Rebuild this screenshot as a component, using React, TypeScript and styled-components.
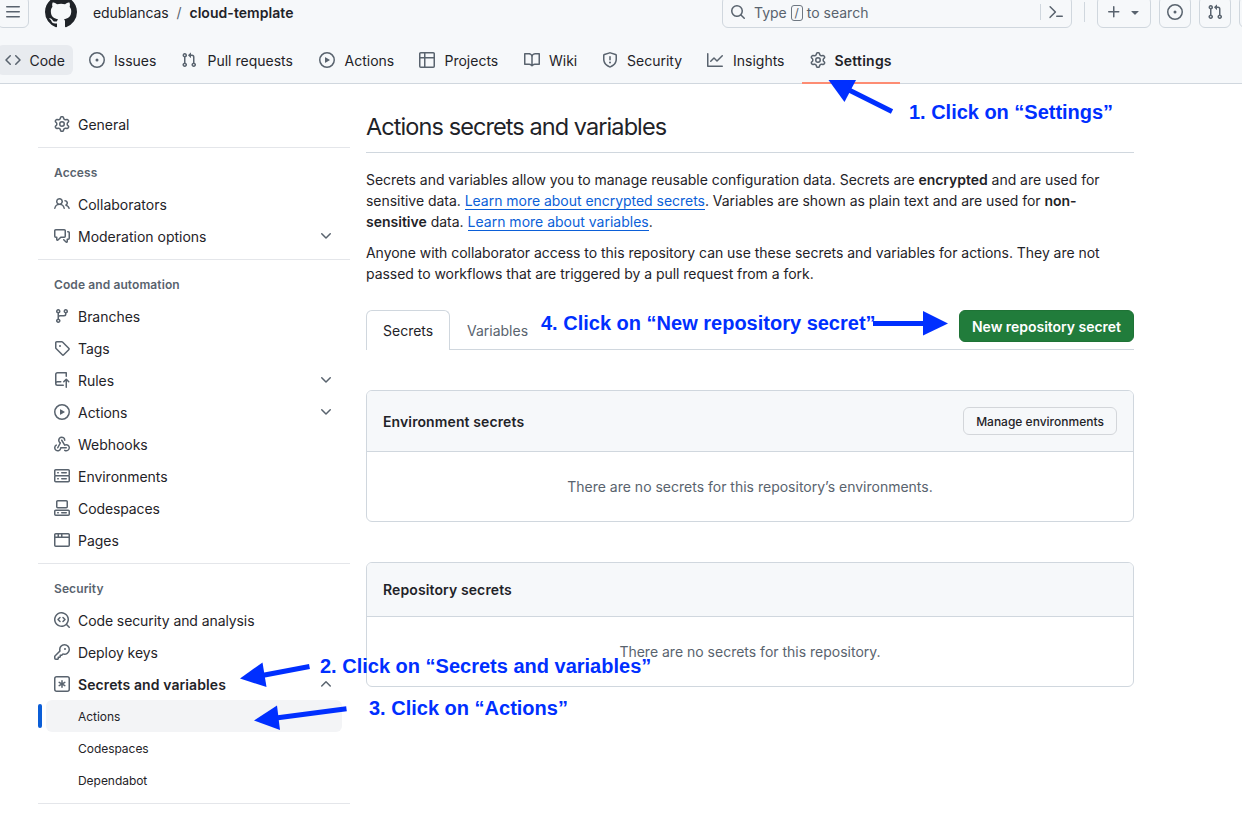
import React from "react";
import styled, { createGlobalStyle, css } from "styled-components";

const GlobalStyle = createGlobalStyle`
  *, *::before, *::after { box-sizing: border-box; }
  body {
    margin: 0;
    background: #fff;
    color: #1f2328;
    font: 400 14px/21px Inter, "Liberation Sans", sans-serif;
    overflow: hidden;
  }
  h1, h2, h3, p, ul { margin: 0; padding: 0; }
  ul { list-style: none; }
  button { font: inherit; color: inherit; }
`;

/* ---------- icons ---------- */

const icons = {
  bars: ["M1 2.75A.75.75 0 0 1 1.75 2h12.5a.75.75 0 0 1 0 1.5H1.75A.75.75 0 0 1 1 2.75Zm0 5A.75.75 0 0 1 1.75 7h12.5a.75.75 0 0 1 0 1.5H1.75A.75.75 0 0 1 1 7.75ZM1.75 12h12.5a.75.75 0 0 1 0 1.5H1.75a.75.75 0 0 1 0-1.5Z"],
  github: ["M8 0c4.42 0 8 3.58 8 8a8.013 8.013 0 0 1-5.45 7.59c-.4.08-.55-.17-.55-.38 0-.27.01-1.13.01-2.2 0-.75-.25-1.23-.54-1.48 1.78-.2 3.65-.88 3.65-3.95 0-.88-.31-1.59-.82-2.15.08-.2.36-1.02-.08-2.12 0 0-.67-.22-2.2.82-.64-.18-1.32-.27-2-.27-.68 0-1.36.09-2 .27-1.53-1.03-2.2-.82-2.2-.82-.44 1.1-.16 1.92-.08 2.12-.51.56-.82 1.28-.82 2.15 0 3.06 1.86 3.75 3.64 3.95-.23.2-.44.55-.51 1.07-.46.21-1.61.55-2.33-.66-.15-.24-.6-.83-1.23-.82-.67.01-.27.38.01.53.34.19.73.9.82 1.13.16.45.68 1.31 2.69.94 0 .67.01 1.3.01 1.49 0 .21-.15.45-.55.38A7.995 7.995 0 0 1 0 8c0-4.42 3.58-8 8-8Z"],
  code: ["m11.28 3.22 4.25 4.25a.75.75 0 0 1 0 1.06l-4.25 4.25a.749.749 0 0 1-1.275-.326.749.749 0 0 1 .215-.734L13.94 8l-3.72-3.72a.749.749 0 0 1 .326-1.275.749.749 0 0 1 .734.215Zm-6.56 0a.751.751 0 0 1 1.042.018.751.751 0 0 1 .018 1.042L2.06 8l3.72 3.72a.749.749 0 0 1-.326 1.275.749.749 0 0 1-.734-.215L.47 8.53a.75.75 0 0 1 0-1.06Z"],
  issue: [
    "M8 9.5a1.5 1.5 0 1 0 0-3 1.5 1.5 0 0 0 0 3Z",
    "M8 0a8 8 0 1 1 0 16A8 8 0 0 1 8 0ZM1.5 8a6.5 6.5 0 1 0 13 0 6.5 6.5 0 0 0-13 0Z",
  ],
  pull: ["M1.5 3.25a2.25 2.25 0 1 1 3 2.122v5.256a2.251 2.251 0 1 1-1.5 0V5.372A2.25 2.25 0 0 1 1.5 3.25Zm5.677-.177L9.573.677A.25.25 0 0 1 10 .854V2.5h1A2.5 2.5 0 0 1 13.5 5v5.628a2.251 2.251 0 1 1-1.5 0V5a1 1 0 0 0-1-1h-1v1.646a.25.25 0 0 1-.427.177L7.177 3.427a.25.25 0 0 1 0-.354ZM3.75 2.5a.75.75 0 1 0 0 1.5.75.75 0 0 0 0-1.5Zm0 9.5a.75.75 0 1 0 0 1.5.75.75 0 0 0 0-1.5Zm8.25.75a.75.75 0 1 0 1.5 0 .75.75 0 0 0-1.5 0Z"],
  play: ["M8 0a8 8 0 1 1 0 16A8 8 0 0 1 8 0ZM1.5 8a6.5 6.5 0 1 0 13 0 6.5 6.5 0 0 0-13 0Zm4.879-2.773 4.264 2.559a.25.25 0 0 1 0 .428l-4.264 2.559A.25.25 0 0 1 6 10.559V5.442a.25.25 0 0 1 .379-.215Z"],
  table: ["M0 1.75C0 .784.784 0 1.75 0h12.5C15.216 0 16 .784 16 1.75v12.5A1.75 1.75 0 0 1 14.25 16H1.75A1.75 1.75 0 0 1 0 14.25ZM6.5 6.5v8h7.75a.25.25 0 0 0 .25-.25V6.5Zm8-1.5V1.75a.25.25 0 0 0-.25-.25H6.5V5Zm-13 1.5v7.75c0 .138.112.25.25.25H5v-8ZM5 5V1.5H1.75a.25.25 0 0 0-.25.25V5Z"],
  book: ["M0 1.75A.75.75 0 0 1 .75 1h4.253c1.227 0 2.317.59 3 1.501A3.743 3.743 0 0 1 11.006 1h4.245a.75.75 0 0 1 .75.75v10.5a.75.75 0 0 1-.75.75h-4.507a2.25 2.25 0 0 0-1.591.659l-.622.621a.75.75 0 0 1-1.06 0l-.622-.621A2.25 2.25 0 0 0 5.258 13H.75a.75.75 0 0 1-.75-.75Zm7.251 10.324.004-5.073-.002-2.253A2.25 2.25 0 0 0 5.003 2.5H1.5v9h3.757a3.75 3.75 0 0 1 1.994.574ZM8.755 4.75l-.004 7.322a3.752 3.752 0 0 1 1.992-.572H14.5v-9h-3.495a2.25 2.25 0 0 0-2.25 2.25Z"],
  shield: ["M7.467.133a1.748 1.748 0 0 1 1.066 0l5.25 1.68A1.75 1.75 0 0 1 15 3.48V7c0 1.566-.32 3.182-1.303 4.682-.983 1.498-2.585 2.813-5.032 3.855a1.697 1.697 0 0 1-1.33 0c-2.447-1.042-4.049-2.357-5.032-3.855C1.32 10.182 1 8.566 1 7V3.48a1.75 1.75 0 0 1 1.217-1.667Zm.61 1.429a.25.25 0 0 0-.153 0l-5.25 1.68a.25.25 0 0 0-.174.238V7c0 1.358.275 2.666 1.057 3.86.784 1.194 2.121 2.34 4.366 3.297a.196.196 0 0 0 .154 0c2.245-.956 3.582-2.104 4.366-3.298C13.225 9.666 13.5 8.36 13.5 7V3.48a.251.251 0 0 0-.174-.237l-5.25-1.68ZM8.75 4.75v3a.75.75 0 0 1-1.5 0v-3a.75.75 0 0 1 1.5 0ZM9 10.5a1 1 0 1 1-2 0 1 1 0 0 1 2 0Z"],
  graph: ["M1.5 1.75V13.5h13.75a.75.75 0 0 1 0 1.5H.75a.75.75 0 0 1-.75-.75V1.75a.75.75 0 0 1 1.5 0Zm14.28 2.53-5.25 5.25a.75.75 0 0 1-1.06 0L7 7.06 4.28 9.78a.751.751 0 0 1-1.042-.018.751.751 0 0 1-.018-1.042l3.25-3.25a.75.75 0 0 1 1.06 0L10 7.94l4.72-4.72a.751.751 0 0 1 1.042.018.751.751 0 0 1 .018 1.042Z"],
  gear: ["M8 0a8.2 8.2 0 0 1 .701.031C9.444.095 9.99.645 10.16 1.29l.288 1.107c.018.066.079.158.212.224.231.114.454.243.668.386.123.082.233.09.299.071l1.103-.303c.644-.176 1.392.021 1.82.63.27.385.506.792.704 1.218.315.675.111 1.422-.364 1.891l-.814.806c-.049.048-.098.147-.088.294.016.257.016.515 0 .772-.01.147.038.246.088.294l.814.806c.475.469.679 1.216.364 1.891a7.977 7.977 0 0 1-.704 1.217c-.428.61-1.176.807-1.82.63l-1.102-.302c-.067-.019-.177-.011-.3.071a5.909 5.909 0 0 1-.668.386c-.133.066-.194.158-.211.224l-.29 1.106c-.168.646-.715 1.196-1.458 1.26a8.006 8.006 0 0 1-1.402 0c-.743-.064-1.289-.614-1.458-1.26l-.289-1.106c-.018-.066-.079-.158-.212-.224a5.738 5.738 0 0 1-.668-.386c-.123-.082-.233-.09-.299-.071l-1.103.303c-.644.176-1.392-.021-1.82-.63a8.12 8.12 0 0 1-.704-1.218c-.315-.675-.111-1.422.363-1.891l.815-.806c.05-.048.098-.147.088-.294a6.214 6.214 0 0 1 0-.772c.01-.147-.038-.246-.088-.294l-.815-.806C.635 6.045.431 5.298.746 4.623a7.92 7.92 0 0 1 .704-1.217c.428-.61 1.176-.807 1.82-.63l1.102.302c.067.019.177.011.3-.071.214-.143.437-.272.668-.386.133-.066.194-.158.211-.224l.29-1.106C6.009.645 6.556.095 7.299.03 7.53.01 7.764 0 8 0Zm-.571 1.525c-.036.003-.108.036-.137.146l-.289 1.105c-.147.561-.549.967-.998 1.189-.173.086-.34.183-.5.29-.417.278-.97.423-1.529.27l-1.103-.303c-.109-.03-.175.016-.195.045-.22.312-.412.644-.573.99-.014.031-.021.11.059.19l.815.806c.411.406.562.957.53 1.456a4.709 4.709 0 0 0 0 .582c.032.499-.119 1.05-.53 1.456l-.815.806c-.081.08-.073.159-.059.19.162.346.353.677.573.989.02.03.085.076.195.046l1.102-.303c.56-.153 1.113-.008 1.53.27.161.107.328.204.501.29.447.222.85.629.997 1.189l.289 1.105c.029.109.101.143.137.146a6.6 6.6 0 0 0 1.142 0c.036-.003.108-.036.137-.146l.289-1.105c.147-.561.549-.967.998-1.189.173-.086.34-.183.5-.29.417-.278.97-.423 1.529-.27l1.103.303c.109.029.175-.016.195-.045.22-.313.411-.644.573-.99.014-.031.021-.11-.059-.19l-.815-.806c-.411-.406-.562-.957-.53-1.456a4.709 4.709 0 0 0 0-.582c-.032-.499.119-1.05.53-1.456l.815-.806c.081-.08.073-.159.059-.19a6.464 6.464 0 0 0-.573-.989c-.02-.03-.085-.076-.195-.046l-1.102.303c-.56.153-1.113.008-1.53-.27a4.44 4.44 0 0 0-.501-.29c-.447-.222-.85-.629-.997-1.189l-.289-1.105c-.029-.11-.101-.143-.137-.146a6.6 6.6 0 0 0-1.142 0ZM11 8a3 3 0 1 1-6 0 3 3 0 0 1 6 0ZM9.5 8a1.5 1.5 0 1 0-3.001.001A1.5 1.5 0 0 0 9.5 8Z"],
  search: ["M10.68 11.74a6 6 0 0 1-7.922-8.982 6 6 0 0 1 8.982 7.922l3.04 3.04a.749.749 0 0 1-.326 1.275.749.749 0 0 1-.734-.215ZM11.5 7a4.499 4.499 0 1 0-8.997 0A4.499 4.499 0 0 0 11.5 7Z"],
  palette: ["m6.354 8.04-4.773 4.773a.75.75 0 1 0 1.061 1.06L7.945 8.57a.75.75 0 0 0 0-1.06L2.642 2.206a.75.75 0 0 0-1.06 1.061L6.353 8.04ZM8.75 11.5a.75.75 0 0 0 0 1.5h5.5a.75.75 0 0 0 0-1.5h-5.5Z"],
  plus: ["M7.75 2a.75.75 0 0 1 .75.75V7h4.25a.75.75 0 0 1 0 1.5H8.5v4.25a.75.75 0 0 1-1.5 0V8.5H2.75a.75.75 0 0 1 0-1.5H7V2.75A.75.75 0 0 1 7.75 2Z"],
  triangle: ["m4.427 7.427 3.396 3.396a.25.25 0 0 0 .354 0l3.396-3.396A.25.25 0 0 0 11.396 7H4.604a.25.25 0 0 0-.177.427Z"],
  people: ["M2 5.5a3.5 3.5 0 1 1 5.898 2.549 5.508 5.508 0 0 1 3.034 4.084.75.75 0 1 1-1.482.235 4 4 0 0 0-7.9 0 .75.75 0 0 1-1.482-.236A5.507 5.507 0 0 1 3.102 8.05 3.493 3.493 0 0 1 2 5.5ZM11 4a3.001 3.001 0 0 1 2.22 5.018 5.01 5.01 0 0 1 2.56 3.012.749.749 0 0 1-.885.954.752.752 0 0 1-.549-.514 3.507 3.507 0 0 0-2.522-2.372.75.75 0 0 1-.574-.73v-.352a.75.75 0 0 1 .416-.672A1.5 1.5 0 0 0 11 5.5.75.75 0 0 1 11 4Zm-5.5-.5a2 2 0 1 0-.001 3.999A2 2 0 0 0 5.5 3.5Z"],
  discussion: ["M1.75 1h8.5c.966 0 1.75.784 1.75 1.75v5.5A1.75 1.75 0 0 1 10.25 10H7.061l-2.574 2.573A1.458 1.458 0 0 1 2 11.543V10h-.25A1.75 1.75 0 0 1 0 8.25v-5.5C0 1.784.784 1 1.75 1ZM1.5 2.75v5.5c0 .138.112.25.25.25h1a.75.75 0 0 1 .75.75v2.19l2.72-2.72a.749.749 0 0 1 .53-.22h3.5a.25.25 0 0 0 .25-.25v-5.5a.25.25 0 0 0-.25-.25h-8.5a.25.25 0 0 0-.25.25Zm13 2a.25.25 0 0 0-.25-.25h-.5a.75.75 0 0 1 0-1.5h.5c.966 0 1.75.784 1.75 1.75v5.5A1.75 1.75 0 0 1 14.25 12H14v1.543a1.458 1.458 0 0 1-2.487 1.03L9.22 12.28a.749.749 0 0 1 .326-1.275.749.749 0 0 1 .734.215l2.22 2.22v-2.19a.75.75 0 0 1 .75-.75h1a.25.25 0 0 0 .25-.25Z"],
  branch: ["M9.5 3.25a2.25 2.25 0 1 1 3 2.122V6A2.5 2.5 0 0 1 10 8.5H6a1 1 0 0 0-1 1v1.128a2.251 2.251 0 1 1-1.5 0V5.372a2.25 2.25 0 1 1 1.5 0v1.836A2.493 2.493 0 0 1 6 7h4a1 1 0 0 0 1-1v-.628A2.25 2.25 0 0 1 9.5 3.25Zm-6 0a.75.75 0 1 0 1.5 0 .75.75 0 0 0-1.5 0Zm8.25-.75a.75.75 0 1 0 0 1.5.75.75 0 0 0 0-1.5ZM4.25 12a.75.75 0 1 0 0 1.5.75.75 0 0 0 0-1.5Z"],
  tag: ["M1 7.775V2.75C1 1.784 1.784 1 2.75 1h5.025c.464 0 .91.184 1.238.513l6.25 6.25a1.75 1.75 0 0 1 0 2.474l-5.026 5.026a1.75 1.75 0 0 1-2.474 0l-6.25-6.25A1.752 1.752 0 0 1 1 7.775Zm1.5 0c0 .066.026.13.073.177l6.25 6.25a.25.25 0 0 0 .354 0l5.025-5.025a.25.25 0 0 0 0-.354l-6.25-6.25a.25.25 0 0 0-.177-.073H2.75a.25.25 0 0 0-.25.25ZM6 5a1 1 0 1 1 0 2 1 1 0 0 1 0-2Z"],
  push: ["M1 2.5A2.5 2.5 0 0 1 3.5 0h8.75a.75.75 0 0 1 .75.75v3.5a.75.75 0 0 1-1.5 0V1.5h-8a1 1 0 0 0-1 1v6.708A2.493 2.493 0 0 1 3.5 9h3.25a.75.75 0 0 1 0 1.5H3.5a1 1 0 0 0 0 2h5.75a.75.75 0 0 1 0 1.5H3.5A2.5 2.5 0 0 1 1 11.5Zm13.23 7.79h-.001l-1.224-1.224v6.184a.75.75 0 0 1-1.5 0V9.066L10.28 10.29a.75.75 0 0 1-1.06-1.061l2.505-2.504a.75.75 0 0 1 1.06 0L15.29 9.23a.751.751 0 0 1-.018 1.042.751.751 0 0 1-1.042.018Z"],
  webhook: [
    "M5.5 4.25a2.25 2.25 0 0 1 4.5 0 .75.75 0 0 0 1.5 0 3.75 3.75 0 1 0-6.14 2.889l-2.272 4.258a.75.75 0 0 0 1.324.706L7 7.25a.75.75 0 0 0-.309-1.015A2.25 2.25 0 0 1 5.5 4.25Z",
    "M7.364 3.607a.75.75 0 0 1 1.03.257l2.608 4.349a3.75 3.75 0 1 1-.628 6.785.75.75 0 0 1 .752-1.299 2.25 2.25 0 1 0-.033-3.88.75.75 0 0 1-1.03-.256L7.107 4.636a.75.75 0 0 1 .257-1.03Z",
    "M2.9 8.776A.75.75 0 0 1 2.625 9.8 2.25 2.25 0 1 0 6 11.75a.75.75 0 0 1 .75-.751h5.5a.75.75 0 0 1 0 1.5H7.425a3.751 3.751 0 1 1-5.55-3.998.75.75 0 0 1 1.024.274Z",
  ],
  server: ["M1.75 1h12.5c.966 0 1.75.784 1.75 1.75v4c0 .372-.116.717-.314 1 .198.283.314.628.314 1v4a1.75 1.75 0 0 1-1.75 1.75H1.75A1.75 1.75 0 0 1 0 12.75v-4c0-.358.109-.707.314-1a1.739 1.739 0 0 1-.314-1v-4C0 1.784.784 1 1.75 1ZM1.5 2.75v4c0 .138.112.25.25.25h12.5a.25.25 0 0 0 .25-.25v-4a.25.25 0 0 0-.25-.25H1.75a.25.25 0 0 0-.25.25Zm.25 5.75a.25.25 0 0 0-.25.25v4c0 .138.112.25.25.25h12.5a.25.25 0 0 0 .25-.25v-4a.25.25 0 0 0-.25-.25ZM7 4.75A.75.75 0 0 1 7.75 4h4.5a.75.75 0 0 1 0 1.5h-4.5A.75.75 0 0 1 7 4.75ZM7.75 10h4.5a.75.75 0 0 1 0 1.5h-4.5a.75.75 0 0 1 0-1.5ZM3 4.75A.75.75 0 0 1 3.75 4h.5a.75.75 0 0 1 0 1.5h-.5A.75.75 0 0 1 3 4.75ZM3.75 10h.5a.75.75 0 0 1 0 1.5h-.5a.75.75 0 0 1 0-1.5Z"],
  codespaces: [
    "M0 11.25c0-.966.784-1.75 1.75-1.75h12.5c.966 0 1.75.784 1.75 1.75v3A1.75 1.75 0 0 1 14.25 16H1.75A1.75 1.75 0 0 1 0 14.25Zm2-9.5C2 .784 2.784 0 3.75 0h8.5C13.216 0 14 .784 14 1.75v5a1.75 1.75 0 0 1-1.75 1.75h-8.5A1.75 1.75 0 0 1 2 6.75Zm1.75-.25a.25.25 0 0 0-.25.25v5c0 .138.112.25.25.25h8.5a.25.25 0 0 0 .25-.25v-5a.25.25 0 0 0-.25-.25Zm-2 9.5a.25.25 0 0 0-.25.25v3c0 .138.112.25.25.25h12.5a.25.25 0 0 0 .25-.25v-3a.25.25 0 0 0-.25-.25Z",
    "M7 12.75a.75.75 0 0 1 .75-.75h4.5a.75.75 0 0 1 0 1.5h-4.5a.75.75 0 0 1-.75-.75Zm-4 0a.75.75 0 0 1 .75-.75h.5a.75.75 0 0 1 0 1.5h-.5a.75.75 0 0 1-.75-.75Z",
  ],
  browser: ["M0 2.75C0 1.784.784 1 1.75 1h12.5c.966 0 1.75.784 1.75 1.75v10.5A1.75 1.75 0 0 1 14.25 15H1.75A1.75 1.75 0 0 1 0 13.25ZM14.5 6h-13v7.25c0 .138.112.25.25.25h12.5a.25.25 0 0 0 .25-.25Zm-6-3.5v2h6V2.75a.25.25 0 0 0-.25-.25ZM5 2.5v2h2v-2Zm-3.25 0a.25.25 0 0 0-.25.25V4.5h2v-2Z"],
  codescan: [
    "M8.47 4.97a.75.75 0 0 0 0 1.06L9.94 7.5 8.47 8.97a.75.75 0 1 0 1.06 1.06l2-2a.75.75 0 0 0 0-1.06l-2-2a.75.75 0 0 0-1.06 0ZM6.53 6.03a.75.75 0 0 0-1.06-1.06l-2 2a.75.75 0 0 0 0 1.06l2 2a.75.75 0 1 0 1.06-1.06L5.06 7.5l1.47-1.47Z",
    "M12.246 13.307a7.501 7.501 0 1 1 1.06-1.06l2.474 2.473a.749.749 0 0 1-.326 1.275.749.749 0 0 1-.734-.215ZM1.5 7.5a6.002 6.002 0 0 0 3.608 5.504 6.002 6.002 0 0 0 6.486-1.117.748.748 0 0 1 .292-.293A6 6 0 1 0 1.5 7.5Z",
  ],
  key: ["M10.5 0a5.499 5.499 0 1 1-1.288 10.848l-.932.932a.749.749 0 0 1-.53.22H7v.75a.749.749 0 0 1-.22.53l-.5.5a.749.749 0 0 1-.53.22H5v.75a.749.749 0 0 1-.22.53l-.5.5a.749.749 0 0 1-.53.22h-2A1.75 1.75 0 0 1 0 14.25v-2c0-.199.079-.389.22-.53l4.932-4.932A5.5 5.5 0 0 1 10.5 0Zm-4 5.5c-.001.431.069.86.205 1.269a.75.75 0 0 1-.181.768L1.5 12.56v1.69c0 .138.112.25.25.25h1.69l.06-.06v-1.19a.75.75 0 0 1 .75-.75h1.19l.06-.06v-1.19a.75.75 0 0 1 .75-.75h1.19l1.023-1.025a.75.75 0 0 1 .768-.18A4 4 0 1 0 6.5 5.5ZM11 6a1 1 0 1 1 0-2 1 1 0 0 1 0 2Z"],
  asterisk: [
    "M0 2.75A2.75 2.75 0 0 1 2.75 0h10.5A2.75 2.75 0 0 1 16 2.75v10.5A2.75 2.75 0 0 1 13.25 16H2.75A2.75 2.75 0 0 1 0 13.25ZM2.75 1.5c-.69 0-1.25.56-1.25 1.25v10.5c0 .69.56 1.25 1.25 1.25h10.5c.69 0 1.25-.56 1.25-1.25V2.75c0-.69-.56-1.25-1.25-1.25Z",
    "M8 4a.75.75 0 0 1 .75.75V6.7l1.69-.975a.75.75 0 0 1 .75 1.3L9.5 8l1.69.976a.75.75 0 0 1-.75 1.298L8.75 9.3v1.951a.75.75 0 0 1-1.5 0V9.299l-1.69.976a.75.75 0 0 1-.75-1.3L6.5 8l-1.69-.975a.75.75 0 0 1 .75-1.3l1.69.976V4.75A.75.75 0 0 1 8 4Z",
  ],
  down: ["M12.78 5.22a.749.749 0 0 1 0 1.06l-4.25 4.25a.749.749 0 0 1-1.06 0L3.22 6.28a.749.749 0 1 1 1.06-1.06L8 8.939l3.72-3.719a.749.749 0 0 1 1.06 0Z"],
  up: ["M3.22 10.53a.749.749 0 0 1 0-1.06l4.25-4.25a.749.749 0 0 1 1.06 0l4.25 4.25a.749.749 0 1 1-1.06 1.06L8 6.811 4.28 10.53a.749.749 0 0 1-1.06 0Z"],
};

type IconName = keyof typeof icons;

const Svg = styled.svg`
  display: block;
  flex: none;
  fill: currentColor;
`;

const Icon = ({ name, size = 16 }: { name: IconName; size?: number }) => (
  <Svg width={size} height={size} viewBox="0 0 16 16" aria-hidden>
    {icons[name].map((d) => (
      <path key={d} d={d} />
    ))}
  </Svg>
);

/* ---------- page header ---------- */

const Page = styled.div`
  position: relative;
  width: 1242px;
  height: 818px;
  overflow: hidden;
`;

const Header = styled.header`
  display: flow-root;
  height: 84px;
  background: #f6f8fa;
  border-bottom: 1px solid #d0d7de;
`;

const TopBar = styled.div`
  display: flex;
  align-items: center;
  height: 32px;
  width: 1274px;
  margin: -4px 0 0 -3px;
`;

const HeaderButton = styled.button<{ $wide?: boolean }>`
  display: flex;
  align-items: center;
  justify-content: center;
  gap: 5px;
  flex: none;
  width: ${(p) => (p.$wide ? 54 : 32)}px;
  height: 32px;
  padding: 0;
  border: 1px solid #d0d7de;
  border-radius: 6px;
  background: transparent;
  color: #59636e;
`;

const Logo = styled.a`
  margin: 0 0 0 16px;
  color: #1f2328;
`;

const Crumbs = styled.nav`
  display: flex;
  gap: 8px;
  margin: 1px 0 0 16px;
  width: 629px;
  letter-spacing: -0.1px;
`;

const Slash = styled.span`
  color: #59636e;
`;

const RepoName = styled.span`
  font-weight: 600;
  letter-spacing: 0.05px;
`;

const SearchBox = styled.div`
  display: flex;
  align-items: center;
  width: 350px;
  height: 32px;
  padding: 0 7px;
  border: 1px solid #d0d7de;
  border-radius: 6px;
  color: #59636e;
`;

const SearchText = styled.span`
  display: flex;
  align-items: center;
  gap: 4px;
  flex: 1;
  margin: 1px 0 0 8px;
`;

const KeyHint = styled.kbd`
  width: 12px;
  height: 16px;
  border: 1px solid #6e7781;
  border-radius: 3px;
  font: 12px/14px Inter, sans-serif;
  text-align: center;
`;

const Rule = styled.span<{ $tall?: boolean }>`
  flex: none;
  width: 1px;
  height: ${(p) => (p.$tall ? 20 : 16)}px;
  background: #d0d7de;
  margin: ${(p) => (p.$tall ? "0 12px" : "0 7px 0 0")};
`;

const Actions = styled.div`
  display: flex;
  gap: 8px;
`;

const TabNav = styled.nav`
  display: flex;
  gap: 8px;
  margin: 17px 0 0 -3px;
`;

const NavTab = styled.a<{ $width: number; $hovered?: boolean; $selected?: boolean }>`
  display: flex;
  align-items: center;
  gap: 8px;
  flex: none;
  width: ${(p) => p.$width}px;
  height: ${(p) => (p.$selected ? 39 : 30)}px;
  padding: 0 8px;
  white-space: nowrap;
  border-radius: ${(p) => (p.$hovered ? 6 : 0)}px;
  ${(p) => p.$hovered && css`background: #e8ebef;`}
  ${(p) =>
    p.$selected &&
    css`
      font-weight: 600;
      border-bottom: 2px solid #fd8c73;
      padding-bottom: 7px;
    `}
  svg { color: #59636e; }
`;

const NavLabel = styled.span<{ $offset: number; $spacing?: number }>`
  padding: 1px 0 0 ${(p) => p.$offset}px;
  letter-spacing: ${(p) => p.$spacing ?? 0}px;
`;

/* ---------- sidebar ---------- */

const Body = styled.div`
  display: flex;
  gap: 16px;
  padding: 24px 0 0 38px;
`;

const Sidebar = styled.aside`
  width: 312px;
  flex: none;
`;

const Section = styled.section`
  padding-bottom: 7px;
  border-bottom: 1px solid #e4e6ea;
`;

const SectionTitle = styled.h3`
  height: 40px;
  padding: 15px 16px 0;
  color: #59636e;
  font-size: 12px;
  line-height: 20px;
  font-weight: 600;
  letter-spacing: 0.1px;
`;

const Item = styled.li<{ $bold?: boolean }>`
  display: flex;
  align-items: center;
  gap: 8px;
  height: 32px;
  padding: 0 16px;
  font-weight: ${(p) => (p.$bold ? 600 : 400)};
  svg { color: #59636e; }
`;

const ItemLabel = styled.span<{ $spacing?: number }>`
  flex: 1;
  padding-top: 1px;
  letter-spacing: ${(p) => p.$spacing ?? -0.03}px;
`;

const SubItem = styled.li<{ $current?: boolean }>`
  display: flex;
  align-items: center;
  height: 32px;
  font-size: 12px;
  letter-spacing: -0.04px;
  &::before {
    content: "";
    width: 4px;
    height: 24px;
    margin-right: 4px;
    border-radius: 6px;
    background: ${(p) => (p.$current ? "#0b5ed7" : "transparent")};
  }
`;

const SubLabel = styled.span<{ $current?: boolean }>`
  width: 296px;
  height: 32px;
  padding: 7px 32px 0;
  line-height: 20px;
  border-radius: 6px;
  background: ${(p) => (p.$current ? "#f3f4f6" : "transparent")};
`;

/* ---------- main ---------- */

const Main = styled.main`
  width: 768px;
`;

const Title = styled.h1`
  height: 45px;
  padding-top: 1px;
  font-size: 23.5px;
  line-height: 36px;
  font-weight: 400;
  letter-spacing: -0.92px;
  border-bottom: 1px solid #d0d7de;
`;

const Intro = styled.div`
  display: flex;
  flex-direction: column;
  gap: 10px;
  padding-top: 16px;
  white-space: nowrap;
`;

const Line = styled.span<{ $spacing: number }>`
  display: block;
  letter-spacing: ${(p) => p.$spacing}px;
`;

const Strong = styled.b`
  font-weight: 600;
`;

const Link = styled.a`
  color: #0b5fd8;
  border-bottom: 1px solid #0b5fd8;
`;

const TabRow = styled.div`
  display: flex;
  height: 40px;
  margin-top: 26px;
  border-bottom: 1px solid #d0d7de;
`;

const Tab = styled.a<{ $active?: boolean }>`
  height: 40px;
  padding: 10px 16px 0 17px;
  color: ${(p) => (p.$active ? "#1f2328" : "#59636e")};
  ${(p) =>
    p.$active &&
    css`
      width: 84px;
      padding: 9px 16px 0;
      border: 1px solid #d0d7de;
      border-bottom: 0;
      border-radius: 6px 6px 0 0;
      background: #fff;
    `}
`;

const PrimaryButton = styled.button`
  width: 175px;
  height: 32px;
  margin-left: auto;
  padding: 1px 0 0;
  border: 1px solid #1f7336;
  border-radius: 6px;
  background: #217c3b;
  color: #fff;
  font-weight: 600;
  letter-spacing: -0.03px;
  white-space: nowrap;
`;

const Box = styled.section`
  margin-top: 40px;
  border: 1px solid #d0d7de;
  border-radius: 6px;
  overflow: hidden;
`;

const BoxHeader = styled.div<{ $height: number }>`
  display: flex;
  align-items: center;
  justify-content: space-between;
  height: ${(p) => p.$height}px;
  padding: 0 16px;
  background: #f6f8fa;
  border-bottom: 1px solid #d0d7de;
`;

const BoxTitle = styled.h2`
  font-size: 14px;
  line-height: 21px;
  font-weight: 600;
  letter-spacing: 0.11px;
`;

const SmallButton = styled.button`
  width: 154px;
  height: 28px;
  padding: 1px 0 0;
  border: 1px solid #d3d6da;
  border-radius: 6px;
  background: #f6f8fa;
  font-size: 12px;
  font-weight: 500;
  white-space: nowrap;
`;

const Empty = styled.p<{ $height: number }>`
  height: ${(p) => p.$height}px;
  line-height: ${(p) => p.$height}px;
  color: #59636e;
  text-align: center;
`;

/* ---------- annotations drawn over the page ---------- */

const Arrows = styled.svg`
  position: absolute;
  inset: 0;
  fill: #002fff;
  stroke: #002fff;
`;

const Note = styled.span<{ $x: number; $y: number; $spacing: number }>`
  position: absolute;
  left: ${(p) => p.$x}px;
  top: ${(p) => p.$y}px;
  color: #002fff;
  font: 700 20px/24px "Liberation Sans", Arial, sans-serif;
  letter-spacing: ${(p) => p.$spacing}px;
  white-space: nowrap;
`;

/* ---------- data ---------- */

const tabs: { icon: IconName; label: string; width: number; offset: number; spacing?: number }[] = [
  { icon: "code", label: "Code", width: 76, offset: 0.5 },
  { icon: "issue", label: "Issues", width: 84, offset: 1 },
  { icon: "pull", label: "Pull requests", width: 130, offset: 2.5 },
  { icon: "play", label: "Actions", width: 92, offset: 1.5 },
  { icon: "table", label: "Projects", width: 97, offset: 1.5 },
  { icon: "book", label: "Wiki", width: 70, offset: 1 },
  { icon: "shield", label: "Security", width: 97, offset: 1 },
  { icon: "graph", label: "Insights", width: 95, offset: 2 },
  { icon: "gear", label: "Settings", width: 98, offset: 0.5, spacing: 0.22 },
];

type Entry = { icon: IconName; label: string; expand?: "down" | "up"; bold?: boolean; spacing?: number };

const sections: { title?: string; items: Entry[]; sub?: string[] }[] = [
  { items: [{ icon: "gear", label: "General" }] },
  {
    title: "Access",
    items: [
      { icon: "people", label: "Collaborators", spacing: 0 },
      { icon: "discussion", label: "Moderation options", expand: "down", spacing: 0 },
    ],
  },
  {
    title: "Code and automation",
    items: [
      { icon: "branch", label: "Branches" },
      { icon: "tag", label: "Tags" },
      { icon: "push", label: "Rules", expand: "down" },
      { icon: "play", label: "Actions", expand: "down" },
      { icon: "webhook", label: "Webhooks" },
      { icon: "server", label: "Environments" },
      { icon: "codespaces", label: "Codespaces", spacing: -0.1 },
      { icon: "browser", label: "Pages" },
    ],
  },
  {
    title: "Security",
    items: [
      { icon: "codescan", label: "Code security and analysis", spacing: -0.09 },
      { icon: "key", label: "Deploy keys", spacing: -0.08 },
      { icon: "asterisk", label: "Secrets and variables", expand: "up", bold: true, spacing: 0.1 },
    ],
    sub: ["Actions", "Codespaces", "Dependabot"],
  },
];

export default function App() {
  return (
    <Page>
      <GlobalStyle />
      <Header>
        <TopBar>
          <HeaderButton><Icon name="bars" /></HeaderButton>
          <Logo><Icon name="github" size={32} /></Logo>
          <Crumbs>
            <span>edublancas</span>
            <Slash>/</Slash>
            <RepoName>cloud-template</RepoName>
          </Crumbs>
          <SearchBox>
            <Icon name="search" />
            <SearchText>
              Type <KeyHint>/</KeyHint> to search
            </SearchText>
            <Rule />
            <Icon name="palette" />
          </SearchBox>
          <Rule $tall />
          <Actions>
            <HeaderButton $wide>
              <Icon name="plus" />
              <Icon name="triangle" />
            </HeaderButton>
            <HeaderButton><Icon name="issue" /></HeaderButton>
            <HeaderButton><Icon name="pull" /></HeaderButton>
            <HeaderButton />
          </Actions>
        </TopBar>
        <TabNav>
          {tabs.map((t) => (
            <NavTab
              key={t.label}
              $width={t.width}
              $hovered={t.label === "Code"}
              $selected={t.label === "Settings"}
            >
              <Icon name={t.icon} />
              <NavLabel $offset={t.offset} $spacing={t.spacing}>{t.label}</NavLabel>
            </NavTab>
          ))}
        </TabNav>
      </Header>

      <Body>
        <Sidebar>
          {sections.map((s, i) => (
            <Section key={i}>
              {s.title && <SectionTitle>{s.title}</SectionTitle>}
              <ul>
                {s.items.map((it) => (
                  <Item key={it.label} $bold={it.bold}>
                    <Icon name={it.icon} />
                    <ItemLabel $spacing={it.spacing}>{it.label}</ItemLabel>
                    {it.expand && <Icon name={it.expand} />}
                  </Item>
                ))}
                {s.sub?.map((label) => (
                  <SubItem key={label} $current={label === "Actions"}>
                    <SubLabel $current={label === "Actions"}>{label}</SubLabel>
                  </SubItem>
                ))}
              </ul>
            </Section>
          ))}
        </Sidebar>

        <Main>
          <Title>Actions secrets and variables</Title>
          <Intro>
            <p>
              <Line $spacing={-0.035}>
                Secrets and variables allow you to manage reusable configuration data. Secrets are{" "}
                <Strong>encrypted</Strong> and are used for
              </Line>
              <Line $spacing={-0.03}>
                sensitive data. <Link>Learn more about encrypted secrets</Link>. Variables are shown as
                plain text and are used for <Strong>non-</Strong>
              </Line>
              <Line $spacing={0}>
                <Strong>sensitive</Strong> data. <Link>Learn more about variables</Link>.
              </Line>
            </p>
            <p>
              <Line $spacing={-0.04}>
                Anyone with collaborator access to this repository can use these secrets and variables
                for actions. They are not
              </Line>
              <Line $spacing={-0.04}>
                passed to workflows that are triggered by a pull request from a fork.
              </Line>
            </p>
          </Intro>
          <TabRow>
            <Tab $active>Secrets</Tab>
            <Tab>Variables</Tab>
            <PrimaryButton>New repository secret</PrimaryButton>
          </TabRow>
          <Box>
            <BoxHeader $height={61}>
              <BoxTitle>Environment secrets</BoxTitle>
              <SmallButton>Manage environments</SmallButton>
            </BoxHeader>
            <Empty $height={69}>There are no secrets for this repository’s environments.</Empty>
          </Box>
          <Box>
            <BoxHeader $height={54}>
              <BoxTitle>Repository secrets</BoxTitle>
            </BoxHeader>
            <Empty $height={69}>There are no secrets for this repository.</Empty>
          </Box>
        </Main>
      </Body>

      <Arrows width="1242" height="818" viewBox="0 0 1242 818" aria-hidden>
        <g stroke="none">
          <path d="M828.5 80H856L844.5 102Z" />
          <path d="M240 678.5 262.5 662.5 266.5 687Z" />
          <path d="M254 720.5 277 705.5 280 730Z" />
          <path d="M948 323.5 923 311V335.5Z" />
        </g>
        <g strokeWidth="5">
          <path d="M848 89.5 892 111.5" />
          <path d="M262 675.5 309.500 666.500" />
          <path d="M276 718 346.500 708.800" />
          <path d="M873 323.500H925" />
        </g>
      </Arrows>
      <Note $x={909} $y={100} $spacing={-0.02}>1. Click on “Settings”</Note>
      <Note $x={320} $y={654} $spacing={0}>2. Click on “Secrets and variables”</Note>
      <Note $x={369} $y={696} $spacing={0}>3. Click on “Actions”</Note>
      <Note $x={541} $y={311} $spacing={0}>4. Click on “New repository secret”</Note>
    </Page>
  );
}
